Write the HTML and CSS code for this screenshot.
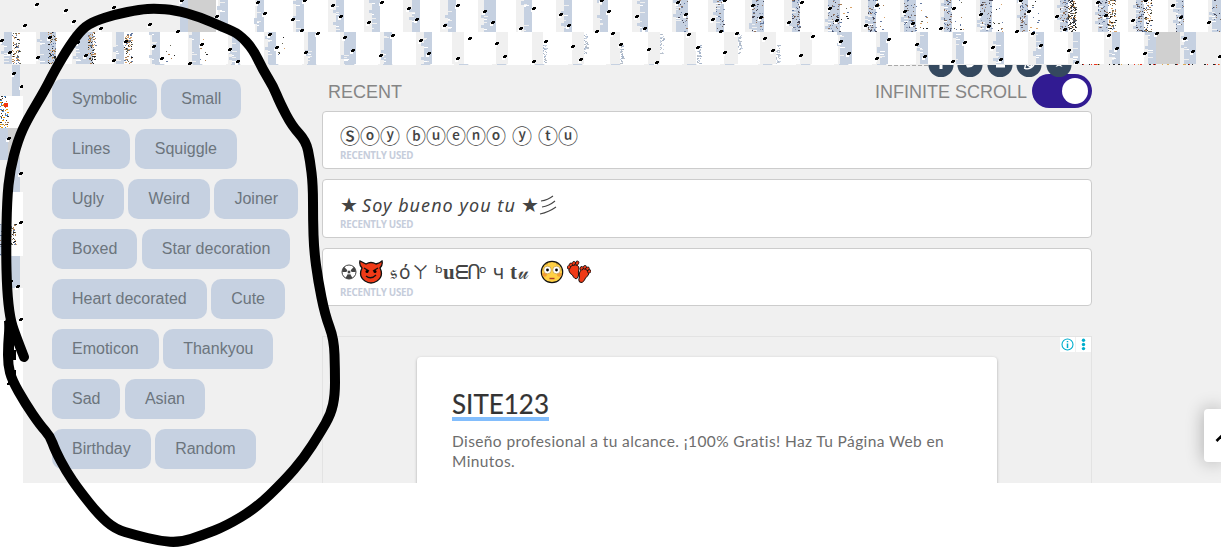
FILE: index.html
```
<!DOCTYPE html>
<html lang="en">
<head>
<meta charset="utf-8">
<title>Fonts</title>
<link rel="stylesheet" href="styles.css">
</head>
<body>
<div class="page">
  <svg class="band" id="band" width="1221" height="65" viewBox="0 0 1221 65"></svg>
  <div class="body">
    <svg class="edge" id="edge" width="23" height="418" viewBox="0 65 23 418"></svg>
    <div class="panel">
      <nav class="tags">
        <div class="tag-row"><a class="tag">Symbolic</a> <a class="tag">Small</a></div>
        <div class="tag-row"><a class="tag">Lines</a> <a class="tag">Squiggle</a></div>
        <div class="tag-row"><a class="tag">Ugly</a> <a class="tag">Weird</a> <a class="tag">Joiner</a></div>
        <div class="tag-row"><a class="tag">Boxed</a> <a class="tag">Star decoration</a></div>
        <div class="tag-row"><a class="tag">Heart decorated</a> <a class="tag">Cute</a></div>
        <div class="tag-row"><a class="tag">Emoticon</a> <a class="tag">Thankyou</a></div>
        <div class="tag-row"><a class="tag">Sad</a> <a class="tag">Asian</a></div>
        <div class="tag-row"><a class="tag">Birthday</a> <a class="tag">Random</a></div>
      </nav>
      <main class="main">
        <header class="head">
          <span>RECENT</span>
          <span class="scroll">INFINITE SCROLL <span class="toggle"><span class="knob"></span></span></span>
        </header>
        <section class="card">
          <div class="line circled">Ⓢⓞⓨ&nbsp;ⓑⓤⓔⓝⓞ&nbsp;ⓨ&nbsp;ⓣⓤ</div>
          <div class="note">RECENTLY USED</div>
        </section>
        <section class="card second">
          <div class="line"><span class="star">★</span><span class="slant">Soy bueno you tu</span><span class="star last">★</span><svg width="20" height="20" viewBox="0 0 20 20" fill="none" stroke="#444" stroke-width="1.1"><path d="M2 6Q9 5 14 1M3 12Q10 11 16 6M1 19Q10 17 17 12"/></svg></div>
          <div class="note">RECENTLY USED</div>
        </section>
        <section class="card third">
          <div class="line fancy">
            <svg class="rad" width="16" height="16" viewBox="0 0 16 16"><circle cx="8" cy="8" r="7" fill="none" stroke="#444"/><path d="M8 8L3 2.8A7 7 0 0 0 1.3 8zM8 8L13 2.8A7 7 0 0 1 14.7 8zM8 8L4.5 14A7 7 0 0 0 11.5 14z" fill="#444"/><circle cx="8" cy="8" r="2" fill="#444" stroke="#fff"/></svg>
            <svg class="devil" width="24" height="24" viewBox="0 0 24 24"><path d="M3 8Q0 5 1 1Q5 3 7 4Q12 1 17 4Q21 3 23 1Q24 5 21 8Q25 16 18 21Q12 25 6 21Q-1 16 3 8Z" fill="#f03a17" stroke="#111" stroke-width="1.3"/><path d="M5 8L10 11M19 8L14 11M7 16Q12 20 17 15" fill="none" stroke="#111" stroke-width="1.4"/><circle cx="8" cy="11.5" r="1.5"/><circle cx="16" cy="11.5" r="1.5"/></svg>
            <span class="g g1">𝔰</span><span class="g g2">ό</span><span class="g g3">ㄚ</span><span class="g g4">ᵇ</span><span class="g g5">u</span><span class="g g6">ᗴ</span><span class="g g7">ᑎ</span><span class="g g8">ᵒ</span><span class="g g9">ч</span><span class="g g10">t</span><span class="g g11">𝓊</span>
            <svg class="blush" width="24" height="24" viewBox="0 0 24 24"><circle cx="12" cy="12" r="10.7" fill="#ffd044" stroke="#111" stroke-width="1.2"/><ellipse cx="4.7" cy="14.8" rx="2.3" ry="2" fill="#f39b35"/><ellipse cx="19.3" cy="14.8" rx="2.3" ry="2" fill="#f39b35"/><circle cx="7.5" cy="10" r="3.8" fill="#fff" stroke="#b58c37" stroke-width=".6"/><circle cx="16.5" cy="10" r="3.8" fill="#fff" stroke="#b58c37" stroke-width=".6"/><circle cx="7.5" cy="10" r="1.4"/><circle cx="16.5" cy="10" r="1.4"/><path d="M9.5 18.5H14.5" stroke="#b23b28" stroke-width="1.4"/><path d="M5 4.5L8 3.5M16 3.5L19 4.5" stroke="#8b6620" stroke-width=".8"/></svg>
            <svg class="feet" width="24" height="24" viewBox="0 0 24 24" fill="#f03a17" stroke="#111"><path d="M2 11Q1 6 6 5Q12 4 12 9Q11 12 11.500 15Q11 19.500 8 18.500Q6 17 5.500 15Q3 14 2 11Z"/><path d="M12.500 13Q14 7 19 9Q24 12 20.500 16Q18 18 17.500 20Q15.500 24 12.500 22Q11 20 12.500 17Q12 15 12.500 13Z"/><path d="M1.800 7.500L2 7M3.500 5L4 4.500M6.500 3.700L7 3M10 3.500L10.500 2.500M14.500 8.500L14.800 8M17.500 7.500L18 7M20.300 8.800L20.800 8.500M22 11.500L22.500 11.200" stroke-width="3.600" stroke-linecap="round"/><path d="M1.800 7.500L2 7M3.500 5L4 4.500M6.500 3.700L7 3M10 3.500L10.500 2.500M14.500 8.500L14.800 8M17.500 7.500L18 7M20.300 8.800L20.800 8.500M22 11.500L22.500 11.200" stroke="#f03a17" stroke-width="2.200" stroke-linecap="round"/></svg>
          </div>
          <div class="note">RECENTLY USED</div>
        </section>
        <section class="ad">
          <div class="ad-marks">
            <svg width="15" height="15" viewBox="0 0 15 15"><circle cx="7.5" cy="7.5" r="5.5" fill="none" stroke="#00aecd" stroke-width="1.1"/><path d="M7.5 6.5V11M7.5 4V5.3" stroke="#00aecd" stroke-width="1.5"/></svg>
            <svg width="15" height="15" viewBox="0 0 15 15" fill="#00aecd"><circle cx="7.5" cy="3.3" r="1.7"/><circle cx="7.5" cy="7.5" r="1.7"/><circle cx="7.5" cy="11.6" r="1.7"/></svg>
          </div>
          <div class="ad-card">
            <div class="ad-title">SITE123</div>
            <div class="ad-text"><div class="l1">Diseño profesional a tu alcance. ¡100% Gratis! Haz Tu Página Web en</div><div class="l2">Minutos.</div></div>
          </div>
        </section>
      </main>
      <svg class="share" width="160" height="15" viewBox="0 0 160 15">
        <g fill="#35495f"><circle cx="29" cy="-.5" r="12.6"/><circle cx="58" cy="-.5" r="12.6"/><circle cx="88" cy="-.5" r="12.6"/><circle cx="117" cy="-.5" r="12.6"/><circle cx="147" cy="-.5" r="12.6"/></g>
        <path d="M27.5 0H30.5V4H27.5zM54 0H62Q60 3 55 2.5zM84 0H93V2.5H84z" fill="#fff"/>
        <path d="M112.5 4L113.5 0M113 3.5Q118 5 122 0M115 0L118 1.7L120 0" fill="none" stroke="#fff" stroke-width="1.4"/>
        <path d="M143.500 2L145 0H149L150.500 2L147 .8z" fill="#fff"/>
        <path d="M-24 .5H17" stroke="#aaa" stroke-dasharray="4 2"/>
      </svg>
      <div class="top-btn"><svg width="17" height="53" viewBox="0 0 17 53"><path d="M12.500 32L18 26.500" stroke="#000" stroke-width="2.600"/></svg></div>
    </div>
  </div>
  <svg class="marker" width="1221" height="548" viewBox="0 0 1221 548"><path id="stroke"/><path d="M4 321H14V350H16V360H12V370H16V376H8Z" class="ink"/></svg>
</div>
<script src="app.js"></script>
</body>
</html>
```

FILE: styles.css
```
body { margin: 0; background: #fff; font-family: "Liberation Sans", Arial, sans-serif; }
.page { position: relative; width: 1221px; height: 548px; overflow: hidden; }
.band, .edge { display: block; flex: none; shape-rendering: crispEdges; }
.body { display: flex; height: 418px; }
.panel { position: relative; flex: 1; display: flex; background: #f0f0f0; overflow: hidden; }
.tags { width: 270px; padding: 14px 0 0 29px; box-sizing: content-box; flex: none; color: #6c757d; }
.tag-row { height: 50px; font-size: 16px; white-space: nowrap; }
.tag { display: inline-block; height: 40px; line-height: 39px; padding: 0 20px; border-radius: 10px; background: #c6d1e1; }
.main { width: 770px; flex: none; display: flex; flex-direction: column; }
.head { flex: none; display: flex; justify-content: space-between; height: 37px; margin-top: 9px; padding-left: 6px; font-size: 18px; line-height: 36px; color: #858585; }
.scroll { display: flex; gap: 5px; }
.toggle { display: flex; justify-content: flex-end; width: 60px; height: 34px; border-radius: 17px; background: #311b92; box-sizing: border-box; padding: 4px; }
.knob { width: 26px; height: 26px; border-radius: 50%; background: #fff; }
.card { flex: none; box-sizing: border-box; height: 58px; margin-bottom: 10px; padding: 9px 17px 0; border: 1px solid #ccc; border-radius: 4px; background: #fff; color: #444; }
.second { height: 59px; padding-top: 10px; }
.line { display: flex; align-items: center; height: 30px; line-height: 30px; font-size: 20px; white-space: pre; }
.circled { font-family: "Noto Sans CJK JP", sans-serif; font-weight: 500; word-spacing: 1.5px; }
.note { font: bold 9.800px/11px "Noto Sans", sans-serif; color: #c6cddb; letter-spacing: -.26px; margin-top: -1px; }
.third .note { margin-top: 1px; }
.star { font-family: "DejaVu Sans", sans-serif; width: 22px; }
.last { width: 18px; }
.slant { font: italic 18px/30px "Noto Sans", sans-serif; width: 159px; letter-spacing: 1.05px; }
.fancy { height: 29px; }
.third { padding-top: 8px; }
.rad { margin: 0 2px 0 1px; }
.devil { margin-right: 7px; }
.g { flex: none; font-family: "Noto Sans", "DejaVu Sans", "Noto Sans CJK JP", sans-serif; font-size: 19px; }
.g1 { width: 9px; } .g2 { width: 13px; } .g3 { width: 23px; font-size: 17px; } .g4 { width: 8px; }
.g5, .g10 { width: 12px; font-family: "Liberation Serif", serif; font-weight: bold; font-size: 21px; }
.g6, .g7 { width: 12px; } .g8 { width: 14px; } .g9 { width: 17px; }
.g10 { width: 8px; } .g11 { width: 22px; }
.g11 { font-family: "DejaVu Serif", serif; }
.blush { margin: 0 3px 0 0; }
.ad { position: relative; box-sizing: border-box; width: 770px; flex: 1; margin-top: 20px; padding: 20px 0 0 94px; border: 1px solid #e3e3e3; border-bottom: 0; }
.ad-marks { position: absolute; top: 0; right: 0; display: flex; gap: 1px; }
.ad-marks svg { display: block; background: #fff; }
.ad-card { box-sizing: border-box; width: 580px; height: 150px; padding: 31px 35px 0; border-radius: 4px; background: #fff; box-shadow: 0 1px 3px rgba(0,0,0,.3); }
.ad-title { display: inline-block; height: 29px; line-height: 32px; border-bottom: 4px solid #82bdfc; font-family: Lato, sans-serif; font-size: 26px; font-weight: 400; -webkit-text-stroke: .2px #333; color: #333; }
.ad-text { margin-top: 10px; font: 15.500px/20px Lato, sans-serif; letter-spacing: .39px; color: #6d6d6d; white-space: nowrap; }
.share { position: absolute; top: 0; left: 889px; overflow: visible; }
.top-btn { position: absolute; top: 344px; right: 0; width: 17px; height: 53px; border-radius: 4px 0 0 4px; background: #fff; box-shadow: 0 0 18px rgba(0,0,0,.3); }
.marker { position: absolute; left: 0; top: 0; }
#stroke { fill: none; stroke: #000; stroke-width: 10; stroke-linecap: round; stroke-linejoin: round; }
.ink { fill: #000; }
```

FILE: app.js
```
const GREY = '#f0f0f0', BLUE = '#c6d1e1', DARK = '#d0d0d0', WHITE = '#fff';
let seed = 7;
const rnd = () => (seed = (seed * 16807) % 2147483647) / 2147483647;
const rect = (x, y, w, h, f) => `<rect x="${x}" y="${y}" width="${w}" height="${h}" fill="${f}"/>`;
const speck = ([x, y]) => rect(x - 3, y + 1, 3, 3, WHITE) + rect(x - 1, y - 1, 3, 2, '#000') + rect(x - 2, y, 3, 2, '#000');
function noise(x, y, w, h, n, colors) {
  let s = '';
  for (let i = 0; i < n; i++) s += rect(x + Math.floor(rnd() * w), y + Math.floor(rnd() * h), rnd() > .7 ? 2 : 1, 1, colors[Math.floor(rnd() * colors.length)]);
  return s;
}
// Each stripe: grey start, blue start, blue end.
const top1 = [[218,220,228],[255,257,264],[293,296,304],[328,336,344],[364,372,380],[403,412,420],[440,448,456],[478,484,496],[516,524,532],[556,564,572],[593,600,608],[632,640,648],[672,676,688],[708,716,724],[745,752,764],[784,792,800],[824,828,840],[861,868,876],[900,904,916],[940,944,952],[976,980,992],[1016,1020,1028],[1054,1060,1068],[1092,1098,1108],[1128,1136,1144],[1168,1176,1184],[1208,1212,1221]];
const top2 = [[0,4,12],[36,40,56],[72,76,93],[112,116,124],[150,152,160],[188,192,200],[228,232,240],[264,268,276],[304,308,316],[340,344,356],[380,384,392],[416,424,432],[452,464,464],[496,508,508],[532,543,543],[572,584,584],[610,620,620],[648,660,660],[684,696,696],[724,738,738],[760,776,776],[800,812,812],[838,840,852],[876,880,888],[916,920,928],[952,956,964],[988,996,1004],[1028,1036,1044],[1068,1073,1080],[1104,1112,1120],[1144,1148,1156],[1180,1184,1196]];
const spots = [37,4,66,10,74,21,25,25,114,7,101,28,150,24,182,0,178,31,217,16,258,2,265,13,293,19,305,0,302,30,333,5,341,16,369,22,382,2,409,8,417,19,445,25,458,5,485,11,493,22,521,28,534,8,561,14,569,25,597,31,602,0,609,11,637,16,645,28,678,2,686,14,713,19,725,0,721,31,753,5,761,17,789,22,802,2,830,8,837,20,866,25,877,5,905,11,913,23,941,28,954,8,981,14,989,26,1017,31,1021,0,1029,11,1057,16,1065,29,1098,2,1106,15,1133,20,1146,0,1173,5,1181,17,1209,22,2,40,10,52,38,57,50,37,78,42,86,55,114,60,126,41,154,46,162,58,190,63,202,44,230,49,238,61,270,34,277,47,306,52,318,33,345,37,353,50,381,55,393,35,421,40,429,53,458,58,470,38,497,43,505,56,534,61,546,41,573,46,581,59,613,33,621,44,649,49,657,62,689,34,698,47,725,52,737,33,765,38,773,50,801,55,813,36,841,41,849,53,877,58,889,39,917,44,925,56,953,61,965,42,993,47,1001,59,1033,33,1041,45,1069,50,1077,62,1109,35,1117,48,1145,53,1157,33,1185,38,1193,51,1220,56];
const pairs = a => a.reduce((r, v, i) => (i % 2 ? r[r.length - 1].push(v) : r.push([v]), r), []);
const mixed = ['#445', '#776b66', '#95745f', '#6379a0', '#8998b3'];
const inks = ['#222', '#665', '#a77c52', '#667ba2', '#d9a36a'];
const pale = ['#a8b6ca', '#c6d1e1', '#b8c0ca'];

function stripes(list, y) {
  return list.map(([g, a, b]) => {
    let s = rect(g, y, a - g, 32, GREY) + (b > a ? rect(a, y, b - a, 32, BLUE) : '');
    if (b > a) for (let i = 0; i < 5; i++) {
      const yy = y + 2 + Math.floor(rnd() * 29);
      s += rect(a, yy, 2 + Math.floor(rnd() * 4), 1, i % 2 ? WHITE : GREY);
      if (i % 2) s += rect(a - 3, Math.max(y, yy - 4), 3, 3, BLUE);
    }
    return s;
  }).join('');
}
let out = rect(0, 0, 1221, 64, WHITE) + rect(0, 0, 180, 32, GREY) + rect(180, 0, 8, 32, BLUE) + rect(188, 0, 28, 32, DARK);
out += stripes(top1, 0) + stripes(top2, 32) + rect(1156, 32, 24, 32, DARK) + rect(1196, 32, 25, 32, GREY);
top1.forEach(([g, a, b]) => {
  if (g > 660) out += noise(a, 0, b - a, 32, g > 1130 ? 16 : g > 730 ? 44 : 22, mixed);
  if (g > 810 && g < 1050) out += noise(b, 0, 12, 32, 11, inks);
  if (g >= 1050 && g < 1150) out += noise(b, 0, 8, 32, 75, inks);
  if (g === 1054) out += noise(1068, 0, 8, 32, 60, ['#333', '#555']);
});
[12, 48, 88, 124].forEach(x => out += noise(x, 32, 8, 32, 78, inks));
[165, 200, 240, 276].forEach(x => out += noise(x, 35, 10, 27, 6, inks));
[543, 584, 620, 660, 697, 738, 776].forEach((x, i) => out += noise(x, i % 2 ? 34 : 45, 4, 20, 38, pale));
out += rect(0, 64, 1221, 1, GREY);
for (let x = 155; x < 900; x += 38) out += rect(x, 64, 9, 1, BLUE) + rect(x + 10, 64, 23, 1, WHITE);
out += noise(1080, 64, 140, 1, 40, ['#222', '#e32', '#da5', '#222']);
out += pairs(spots).map(speck).join('');
document.getElementById('band').innerHTML = out;

let side = rect(0, 64, 23, 256, GREY) + rect(0, 320, 23, 164, WHITE);
side += rect(12, 64, 8, 32, BLUE) + rect(0, 96, 23, 32, WHITE) + noise(0, 96, 8, 32, 65, ['#333', '#e90', '#48c', '#a74']) + rect(4, 103, 4, 4, '#f33412');
side += rect(0, 128, 8, 32, BLUE) + rect(8, 128, 12, 32, DARK) + rect(12, 160, 8, 32, BLUE) + rect(12, 192, 11, 32, WHITE);
side += rect(0, 224, 6, 32, BLUE) + rect(12, 224, 11, 32, WHITE) + noise(11, 224, 5, 24, 40, inks) + noise(0, 224, 6, 32, 20, mixed) + rect(10, 256, 10, 32, BLUE) + rect(20, 288, 3, 32, WHITE);
side += [[14,73],[22,86],[9,138],[21,173],[21,222],[11,281],[18,286],[21,319],[9,383]].map(speck).join('');
document.getElementById('edge').innerHTML = side;

// Freehand loop, smoothed through its midpoints.
const loop = pairs([24,357,15,334,10,318,7,290,6,250,7,200,10,170,18,140,27,120,45,90,55,70,70,45,83,28,95,21,115,14.5,140,9.5,155,8.5,175,10,200,17,225,28,239,34,253,49,263,70,273,86,280,103,292,126,306,141,310,160,313,185,313,220,314,250,318,280,325,315,334,339,335,370,335,395,331,414,320,433,304,458,284,481,256,508,226,526,203,535,180,542.5,160,541,135,535,115,529,99,515,79,490,66,471,55,450,50,436,40,425,25,403,12,380,8,365,8,345,10,322]);
let d = `M${loop[0]}`;
for (let i = 1; i < loop.length - 1; i++) d += `Q${loop[i]} ${(loop[i][0] + loop[i + 1][0]) / 2},${(loop[i][1] + loop[i + 1][1]) / 2}`;
document.getElementById('stroke').setAttribute('d', d + `L${loop[loop.length - 1]}`);
```
